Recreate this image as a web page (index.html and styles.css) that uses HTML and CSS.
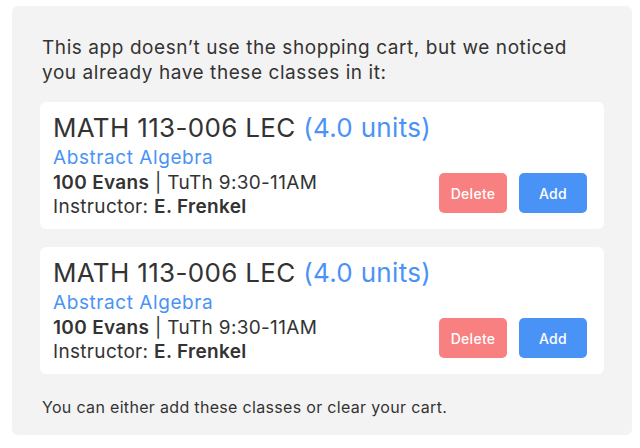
FILE: index.html
```html
<!DOCTYPE html>
<html>
<head>
<meta charset="utf-8">
<link rel="stylesheet" href="styles.css">
</head>
<body>
<div class="panel">
  <p class="intro">This app doesn’t use the shopping cart, but we noticed you already have these classes in it:</p>
  <div class="card">
    <div class="info">
      <div class="title">MATH 113-006 LEC <span class="units">(4.0 units)</span></div>
      <div class="name">Abstract Algebra</div>
      <div class="line"><b>100 Evans</b> | TuTh 9:30-11AM</div>
      <div class="line">Instructor: <b>E. Frenkel</b></div>
    </div>
    <div class="actions">
      <button class="btn del">Delete</button>
      <button class="btn add">Add</button>
    </div>
  </div>
  <div class="card">
    <div class="info">
      <div class="title">MATH 113-006 LEC <span class="units">(4.0 units)</span></div>
      <div class="name">Abstract Algebra</div>
      <div class="line"><b>100 Evans</b> | TuTh 9:30-11AM</div>
      <div class="line">Instructor: <b>E. Frenkel</b></div>
    </div>
    <div class="actions">
      <button class="btn del">Delete</button>
      <button class="btn add">Add</button>
    </div>
  </div>
  <p class="outro">You can either add these classes or clear your cart.</p>
</div>
</body>
</html>
```
FILE: styles.css
```css
html, body { margin: 0; padding: 0; background: #fff; }
body { padding: 6px 8px 0 12px; font-family: Inter, "Liberation Sans", sans-serif; color: #333; letter-spacing: 0.02em; }
.panel {
  width: 620px;
  box-sizing: border-box;
  height: 429px;
  background: #f3f3f3;
  border-radius: 6px;
  padding: 29px 28px 0 28px;
  display: flex;
  flex-direction: column;
}
.intro { margin: 0 0 17px 2px; font-size: 19px; line-height: 25px; width: 530px; letter-spacing: 0.03em; }
.card {
  background: #fff;
  border-radius: 6px;
  padding: 10px 17px 10px 13px;
  display: flex;
  justify-content: space-between;
  align-items: flex-end;
  margin-bottom: 18px;
}
.title { font-size: 26px; line-height: 32px; }
.units { color: #4a93f6; }
.name { color: #4a93f6; font-size: 19px; line-height: 27px; letter-spacing: 0.03em; }
.line { font-size: 19px; line-height: 24px; }
.line b { font-weight: 600; }
.actions { display: flex; gap: 12px; margin-bottom: 6px; }
.btn {
  width: 68px; height: 40px;
  border: 0; border-radius: 5px;
  color: #fff; font-family: inherit; font-size: 14px; font-weight: 500; letter-spacing: 0.02em;
}
.del { background: #f88080; }
.add { background: #4a93f6; }
.outro { margin: 5px 0 0 2px; font-size: 16px; line-height: 20px; }
```
